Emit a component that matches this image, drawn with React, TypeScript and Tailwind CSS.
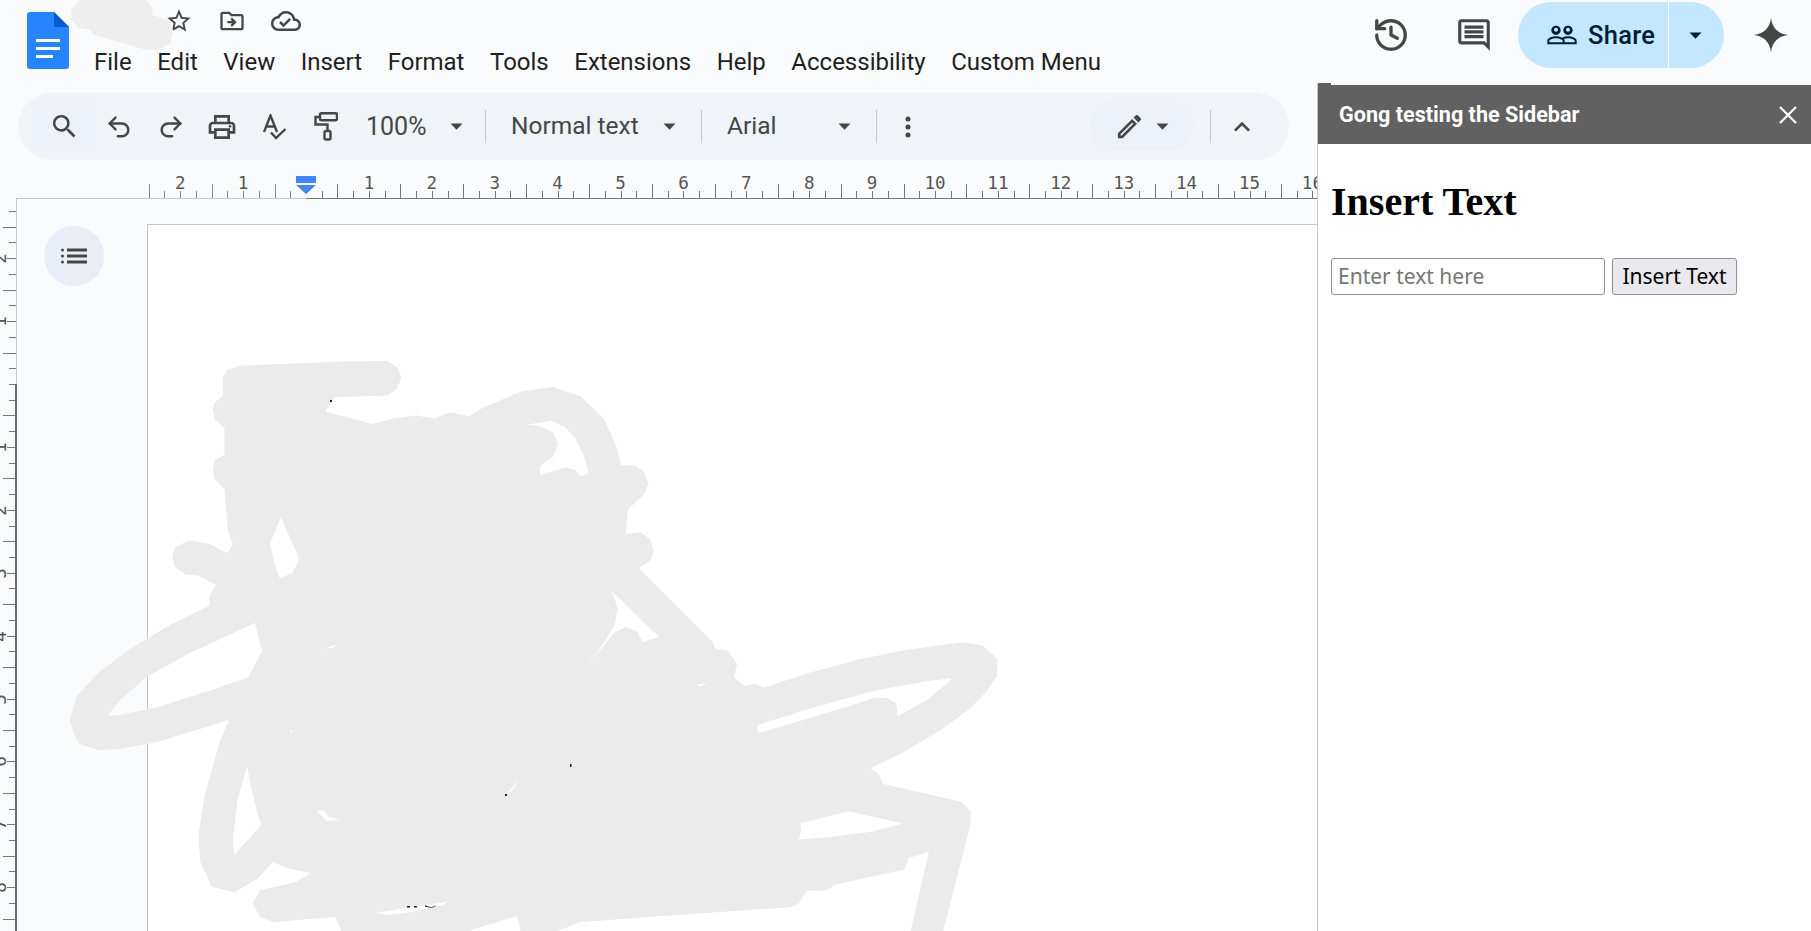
import React from "react";
import { History, Undo2, Redo2 } from "lucide-react";

const Mi = ({ d, size = 24, cls = "" }: { d: string | string[]; size?: number; cls?: string }) => (
  <svg width={size} height={size} viewBox="0 0 24 24" fill="currentColor" className={cls}>
    {(Array.isArray(d) ? d : [d]).map((p, i) => (
      <path key={i} d={p} />
    ))}
  </svg>
);

const Caret = ({ cls = "" }: { cls?: string }) => (
  <svg width="13" height="7" viewBox="0 0 13 7" className={`shrink-0 ${cls}`}>
    <path d="M0.5 0.5h12L6.5 6.8z" fill="currentColor" />
  </svg>
);

const Divider = () => <div className="w-px h-[33px] bg-[#c7c7c7] shrink-0" />;

const Cell = ({ w, children }: { w: string; children: React.ReactNode }) => (
  <div className={`${w} h-full flex items-center justify-center shrink-0`}>{children}</div>
);

function HRuler() {
  const origin = 306;
  const step = 62.9 / 4;
  const ticks: React.ReactNode[] = [];
  const labels: React.ReactNode[] = [];
  for (let k = -10; k <= 65; k++) {
    const x = Math.round(origin + k * step) + 0.5;
    const q = ((k % 4) + 4) % 4;
    const top = q === 2 ? 19 : 26;
    if (k !== 0) ticks.push(<line key={k} x1={x} x2={x} y1={top} y2={33} stroke={k < 0 ? "#8a8a8a" : "#777"} strokeWidth="1" />);
    if (q === 0 && k !== 0) {
      const n = Math.abs(k / 4);
      labels.push(
        <text key={k} x={origin + k * step} y={24} textAnchor="middle" fontFamily="'DejaVu Sans Mono', monospace" fontSize="17.5" fill="#555">
          {n}
        </text>
      );
    }
  }
  return (
    <svg width="1317" height="34" className="block shrink-0">
      <line x1="16" x2="306" y1="33.5" y2="33.5" stroke="#c7c7c7" />
      <line x1="306" x2="1317" y1="33.5" y2="33.5" stroke="#777" />
      {ticks}
      {labels}
      <rect x="296" y="11" width="20" height="7" fill="#4285f4" />
      <path d="M296 20h20l-10 9z" fill="#4285f4" />
    </svg>
  );
}

function VRuler() {
  const origin = 384 - 199;
  const step = 62.9 / 4;
  const out: React.ReactNode[] = [];
  for (let k = -11; k <= 40; k++) {
    const y = Math.round(origin + k * step) + 0.5;
    const q = ((k % 4) + 4) % 4;
    const left = q === 2 ? 3 : 9;
    out.push(<line key={k} x1={q === 0 && k !== 0 ? 7 : left} x2={16} y1={y} y2={y} stroke="#777" />);
    if (q === 0 && k !== 0) {
      out.push(
        <text key={"t" + k} transform={`translate(6 ${y}) rotate(-90)`} textAnchor="middle" fontFamily="'DejaVu Sans Mono', monospace" fontSize="17.5" fill="#555">
          {Math.abs(k / 4)}
        </text>
      );
    }
  }
  return (
    <svg width="17" height="732" className="block shrink-0">
      {out}
      <line x1="16.5" x2="16.5" y1="0" y2={origin} stroke="#c7c7c7" />
      <line x1="16" x2="16" y1={origin} y2="732" stroke="#6b6b6b" strokeWidth="2" />
    </svg>
  );
}

const outline =
  "M370 68L520 58L595 55L612 75L617 100L610 130L595 147L515 152L500 190L573 223L605 208L640 200L668 208L692 192L722 202L740 182L800 137L850 125L893 150L928 208L947 280L955 332L975 332L990 350L997 380L990 410L965 450L962 515L985 510L1000 530L1005 560L1000 585L982 605L1095 800L1100 820L1120 825L1133 860L1128 895L1145 918L1160 912L1175 922L1240 885L1320 848L1395 822L1480 802L1510 810L1533 845L1533 890L1518 930L1490 980L1450 1030L1385 1098L1338 1136L1350 1150L1358 1178L1478 1225L1492 1250L1492 1285L1450 1568L1400 1568L1428 1358L1397 1375L1390 1405L1285 1445L1270 1460L1240 1462L1228 1495L1215 1505L1000 1530L890 1545L870 1560L855 1568L800 1568L795 1528L720 1568L525 1568L515 1530L420 1545L400 1530L388 1495L400 1460L455 1438L478 1415L440 1400L420 1385L395 1430L360 1465L325 1450L308 1385L305 1310L315 1205L338 1065L352 1008L245 1065L185 1085L150 1088L120 1070L107 1010L118 945L150 885L195 825L265 752L322 705L322 680L332 650L305 625L285 622L268 600L265 575L270 550L290 532L320 540L350 565L358 540L350 505L345 395L330 370L327 345L330 320L345 305L345 232L330 210L327 185L330 165L343 148L342 100L350 78Z";

const holes = [
  "M808 225L848 215L868 230L885 262L898 310L905 355L893 362L885 345L870 338L830 358L830 335L850 310L858 275L850 245L830 228Z",
  "M432 470L415 540L422 595L430 632L450 618L460 582L442 510Z",
  "M940 665L1013 788L988 802L980 775L962 762L945 775L905 860L930 800L945 755L950 712Z",
  "M392 750L375 765L290 832L225 895L185 955L165 998L185 995L240 975L320 932L382 895L403 825L398 795Z",
  "M1463 897L1460 905L1425 955L1380 998L1378 965L1365 950L1345 950L1250 1000L1165 1043L1165 1022L1250 975L1345 930L1420 907Z",
  "M380 1130L365 1220L358 1320L360 1365L382 1325L402 1285L398 1270L385 1180Z",
  "M1305 1250L1388 1283L1340 1305L1280 1318L1228 1325L1232 1300L1230 1282Z",
  "M487 1250L497 1248L505 1265L522 1272L503 1277Z",
  "M1072 915L1088 910L1075 920Z",
  "M515 808L500 820L515 815Z",
  "M777 1208L797 1168L790 1190Z",
  "M575 1520L690 1490L680 1500L625 1520L600 1525Z",
  "M445 1035L449 1035L449 1043Z",
];

function Scribble() {
  return (
    <svg width="1811" height="931" className="absolute left-0 top-0 pointer-events-none">
      <g transform="translate(0 340) scale(0.6505 0.3769)">
        <path fillRule="evenodd" fill="#ebebeb" d={[outline, ...holes].join("")} />
      </g>
      <g transform="scale(0.3954 0.3333)">
        <path
          fill="#eeeeee"
          d="M180 30L200 0L370 0L385 25L385 45L425 60L438 90L430 130L400 150L370 150L240 105L225 88L200 85L180 60Z"
        />
      </g>
      <g fill="#222">
        <rect x="330" y="400" width="2" height="2" />
        <rect x="570" y="764" width="1.5" height="3" />
        <rect x="505" y="794" width="2" height="2" />
        <rect x="407" y="906" width="3" height="1.5" />
        <rect x="414" y="906" width="3" height="1.5" />
        <path d="M425 905c3 2 8 3 11 0l-1 1.5c-3 2-7 1-10 0z" />
      </g>
    </svg>
  );
}

export default function App() {
  const menu = ["File", "Edit", "View", "Insert", "Format", "Tools", "Extensions", "Help", "Accessibility", "Custom Menu"];
  return (
    <div className="relative w-[1811px] h-[931px] overflow-hidden bg-[#f9fbfd] font-['Roboto',sans-serif] text-[#444746] flex flex-col">
      {/* Header */}
      <div className="h-[83px] shrink-0 flex">
        <div className="pl-[27px] pt-[12px] shrink-0">
          <svg width="42" height="57" viewBox="0 0 42 57">
            <path d="M3 0H27L42 15V54a3 3 0 0 1-3 3H3a3 3 0 0 1-3-3V3a3 3 0 0 1 3-3z" fill="#2684fc" />
            <path d="M27 0L42 15H27z" fill="#0b57d0" />
            <path d="M9 27h24v3H9zM9 35h24v3H9zM9 43h17v3H9z" fill="#fff" />
          </svg>
        </div>
        <div className="pl-[25px] flex flex-col flex-1">
          <div className="h-[46px] flex items-center pl-[71px] gap-[25px] pb-[4px] text-[#444746]">
            <Mi size={28} d="M22 9.24l-7.19-.62L12 2 9.19 8.63 2 9.24l5.46 4.73L5.82 21 12 17.27 18.18 21l-1.63-7.03L22 9.24zM12 15.4l-3.76 2.27 1-4.28-3.32-2.88 4.38-.38L12 6.1l1.71 4.04 4.38.38-3.32 2.88 1 4.28L12 15.4z" />
            <Mi size={28} d="M20 6h-8l-2-2H4c-1.1 0-2 .9-2 2v12c0 1.1.9 2 2 2h16c1.1 0 2-.9 2-2V8c0-1.1-.9-2-2-2zm0 12H4V6h5.17l2 2H20v10zm-8.01-9l-1.41 1.41L12.16 12H8v2h4.16l-1.59 1.59L11.99 17 16 13.01 11.99 9z" />
            <Mi size={30} d="M19.35 10.04C18.67 6.59 15.64 4 12 4 9.11 4 6.6 5.64 5.35 8.04 2.34 8.36 0 10.91 0 14c0 3.31 2.69 6 6 6h13c2.76 0 5-2.24 5-5 0-2.64-2.05-4.78-4.65-4.96zM19 18H6c-2.21 0-4-1.79-4-4 0-2.05 1.53-3.76 3.56-3.97l1.07-.11.5-.95C8.08 7.14 9.94 6 12 6c2.62 0 4.88 1.86 5.39 4.43l.3 1.5 1.53.11c1.56.1 2.78 1.41 2.78 2.96 0 1.65-1.35 3-3 3zm-9-3.82l-2.09-2.09L6.5 13.5 10 17l6.01-6.01-1.41-1.41z" />
          </div>
          <div className="flex gap-[25.5px] text-[24px] leading-[32px] text-[#1f1f1f]">
            {menu.map((m) => (
              <span key={m}>{m}</span>
            ))}
          </div>
        </div>
        <div className="flex items-start shrink-0 pr-[21px] pt-[2px]">
          <div className="h-[66px] flex items-center">
            <History size={38} strokeWidth={2.1} className="mr-[45px]" />
            <Mi size={38} cls="mr-[25px]" d={["M20 17.17L18.83 16H4V4h16v13.17zM20 2H4c-1.1 0-2 .9-2 2v12c0 1.1.9 2 2 2h14l4 4V4c0-1.1-.9-2-2-2z", "M6 12h12v2H6zM6 9h12v2H6zM6 6h12v2H6z"]} />
          </div>
          <div className="w-[206px] h-[66px] rounded-full bg-[#c2e7ff] flex text-[#001d35]">
            <div className="w-[151px] flex items-center pl-[28px] gap-[10px] border-r border-white">
              <Mi size={32} d="M16.5 13c-1.2 0-3.07.34-4.5 1-1.43-.67-3.3-1-4.5-1C5.33 13 1 14.08 1 16.25V19h22v-2.75c0-2.17-4.33-3.25-6.5-3.25zm-4 4.5h-10v-1.25c0-.54 2.56-1.75 5-1.75s5 1.21 5 1.75v1.25zm9 0H14v-1.25c0-.46-.2-.86-.52-1.22.88-.3 1.96-.53 3.02-.53 2.44 0 5 1.21 5 1.75v1.25zM7.5 12c1.93 0 3.5-1.57 3.5-3.5S9.43 5 7.5 5 4 6.57 4 8.5 5.57 12 7.5 12zm0-5.5c.83 0 1.5.67 1.5 1.5s-.67 1.5-1.5 1.5S6 8.83 6 8s.67-1.5 1.5-1.5zm9 5.5c1.93 0 3.5-1.57 3.5-3.5S18.43 5 16.5 5 13 6.57 13 8.5s1.57 3.5 3.5 3.5zm0-5.5c.83 0 1.5.67 1.5 1.5s-.67 1.5-1.5 1.5S15 8.83 15 8s.67-1.5 1.5-1.5z" />
              <span className="text-[25.5px] font-medium tracking-[0.3px]">Share</span>
            </div>
            <div className="flex-1 flex items-center justify-center pr-[2px]">
              <Caret />
            </div>
          </div>
          <div className="h-[66px] flex items-center ml-[28px]">
            <svg width="38" height="38" viewBox="0 0 24 24">
              <path d="M12 1C12.6 7.5 16.5 11.4 23 12C16.5 12.6 12.6 16.5 12 23C11.4 16.5 7.5 12.6 1 12C7.5 11.4 11.4 7.5 12 1Z" fill="#444746" />
            </svg>
          </div>
        </div>
      </div>

      {/* Body */}
      <div className="flex-1 flex min-h-0">
        <div className="w-[1317px] shrink-0 flex flex-col overflow-hidden">
          <div className="h-[10px] shrink-0" />
          {/* Toolbar */}
          <div className="ml-[18px] w-[1271px] h-[67px] shrink-0 rounded-full bg-[#f0f4f9] flex items-center text-[#444746]">
            <div className="ml-[15px] w-[62px] h-[50px] bg-[#edf2fa] flex items-center justify-center shrink-0">
              <Mi size={31} d="M15.5 14h-.79l-.28-.27A6.471 6.471 0 0 0 16 9.5 6.5 6.5 0 1 0 9.5 16c1.61 0 3.09-.59 4.23-1.57l.27.28v.79l5 4.99L20.49 19l-4.99-5zm-6 0C7.01 14 5 11.99 5 9.5S7.01 5 9.5 5 14 7.01 14 9.5 11.99 14 9.5 14z" />
            </div>
            <Cell w="w-[48px]"><Undo2 size={28} strokeWidth={2.1} /></Cell>
            <Cell w="w-[56px]"><Redo2 size={28} strokeWidth={2.1} /></Cell>
            <Cell w="w-[46px]">
              <Mi size={32} d={["M19 8h-1V3H6v5H5c-1.66 0-3 1.34-3 3v6h4v4h12v-4h4v-6c0-1.66-1.34-3-3-3zM8 5h8v3H8V5zm8 12v2H8v-4h8v2zm2-2v-2H6v2H4v-4c0-.55.45-1 1-1h14c.55 0 1 .45 1 1v4h-2z", "M18 10.5a1 1 0 1 0 0 2 1 1 0 0 0 0-2z"]} />
            </Cell>
            <Cell w="w-[60px]">
              <svg width="24" height="26" viewBox="0 0 24 26" fill="none" stroke="currentColor" strokeWidth="2.4">
                <path d="M1 18L7.5 1.5L14 18M3.5 12.5H11.5" />
                <path d="M8 18.5L13 24L22.5 15" />
              </svg>
            </Cell>
            <Cell w="w-[42px]">
              <svg width="24" height="29" viewBox="0 0 24 29" fill="none" stroke="currentColor" strokeWidth="2.4">
                <rect x="6" y="1.2" width="17" height="7" rx="1.5" />
                <path d="M6 5H1.5V12.5H13.5V19" />
                <rect x="10.5" y="19" width="6" height="8.5" rx="1.5" />
              </svg>
            </Cell>
            <span className="ml-[19px] w-[61px] text-[25px] shrink-0">100%</span>
            <Cell w="w-[58px]"><Caret /></Cell>
            <Divider />
            <span className="ml-[25px] w-[127px] text-[24.5px] pb-[1px] whitespace-nowrap shrink-0">Normal text</span>
            <Cell w="w-[63px]"><Caret /></Cell>
            <Divider />
            <span className="ml-[25px] w-[49px] text-[24.5px] pb-[1px] shrink-0">Arial</span>
            <div className="w-[62px] shrink-0" />
            <Caret />
            <div className="w-[25px] shrink-0" />
            <Divider />
            <Cell w="w-[62px]">
              <svg width="6" height="22" viewBox="0 0 6 22">
                <circle cx="3" cy="3" r="2.5" fill="currentColor" />
                <circle cx="3" cy="11" r="2.5" fill="currentColor" />
                <circle cx="3" cy="19" r="2.5" fill="currentColor" />
              </svg>
            </Cell>
            <div className="w-[151px] shrink-0" />
            <div className="w-[104px] h-[49px] rounded-full bg-[#edf2fa] flex items-center pl-[24px] gap-[11px] shrink-0">
              <Mi size={31} d="M3 17.25V21h3.75L17.81 9.94l-3.75-3.75L3 17.25zM5.92 19H5v-.92l9.06-9.06.92.92L5.92 19zM20.71 5.63l-2.34-2.34c-.2-.2-.45-.29-.71-.29s-.51.1-.7.29l-1.83 1.83 3.75 3.75 1.83-1.83c.39-.39.39-1.02 0-1.41z" />
              <Caret />
            </div>
            <div className="w-[16px] shrink-0" />
            <Divider />
            <Cell w="w-[62px]">
              <Mi size={32} d="M7.41 15.41L12 10.83l4.59 4.58L18 14l-6-6-6 6z" />
            </Cell>
          </div>
          <div className="h-[5px] shrink-0" />
          <HRuler />
          {/* Document */}
          <div className="flex-1 flex min-h-0">
            <VRuler />
            <div className="w-[130px] shrink-0 pl-[27px] pt-[27px]">
              <div className="w-[60px] h-[60px] rounded-full bg-[#e9eef6] flex items-center justify-center">
                <svg width="26" height="16" viewBox="0 0 26 16" fill="#444746">
                  <circle cx="1.5" cy="2" r="1.5" />
                  <circle cx="1.5" cy="8" r="1.5" />
                  <circle cx="1.5" cy="14" r="1.5" />
                  <rect x="6" y="0.5" width="20" height="3" />
                  <rect x="6" y="6.5" width="20" height="3" />
                  <rect x="6" y="12.5" width="20" height="3" />
                </svg>
              </div>
            </div>
            <div className="flex-1 mt-[25px] bg-white border-l border-t border-[#c7c7c7]" />
          </div>
        </div>

        {/* Sidebar */}
        <div className="flex-1 flex flex-col bg-white border-l border-[#c7c7c7] relative z-10">
          <div className="h-[2px] w-[13px] bg-[#616161]" />
          <div className="h-[59px] bg-[#616161] text-white flex items-center justify-between pl-[21px] pr-[13px] shrink-0">
            <span className="text-[21.6px] font-bold pt-[1px]">Gong testing the Sidebar</span>
            <svg width="20" height="20" viewBox="0 0 20 20" stroke="#fff" strokeWidth="2.2">
              <path d="M2 2L18 18M18 2L2 18" />
            </svg>
          </div>
          <div className="pl-[13px]">
            <h1 className="font-['Liberation_Serif',serif] font-bold text-[40px] leading-[42px] text-black mt-[37px] mb-[35px]">Insert Text</h1>
            <div className="flex gap-[7px] font-['Noto_Sans',sans-serif]">
              <div className="w-[274px] h-[37px] rounded-[3px] border border-[#8f8f9d] bg-white flex items-center pl-[6px] pt-[1px] text-[#757575] text-[21px]">Enter text here</div>
              <div className="w-[125px] h-[37px] rounded-[3px] border border-[#8f8f9d] bg-[#e9e9ed] flex items-center justify-center pt-[1px] text-black text-[21px]">Insert Text</div>
            </div>
          </div>
        </div>
      </div>
      <Scribble />
    </div>
  );
}
